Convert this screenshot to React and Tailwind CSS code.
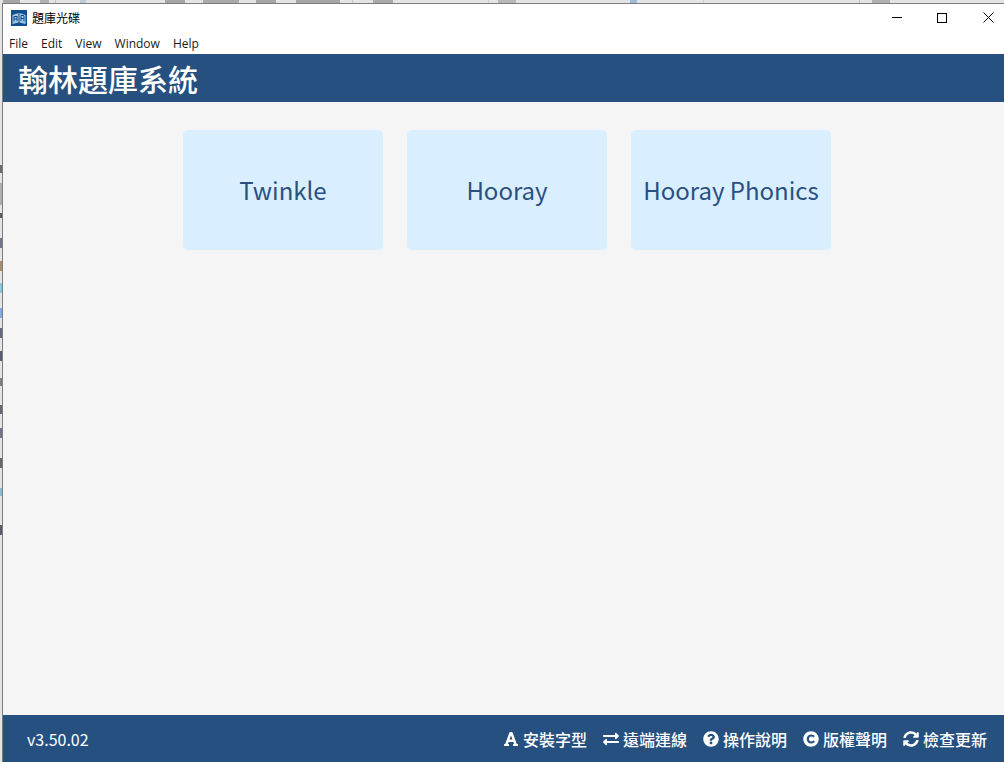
import React from 'react';
import { FaFont, FaExchangeAlt, FaQuestionCircle, FaCopyright, FaSyncAlt } from 'react-icons/fa';

const cjk = "font-['Noto_Sans_CJK_TC','Noto_Sans',sans-serif]";

const links = [
  { label: '安裝字型', icon: FaFont },
  { label: '遠端連線', icon: FaExchangeAlt },
  { label: '操作說明', icon: FaQuestionCircle },
  { label: '版權聲明', icon: FaCopyright },
  { label: '檢查更新', icon: FaSyncAlt },
];

const books = ['Twinkle', 'Hooray', 'Hooray Phonics'];
const menus = ['File', 'Edit', 'View', 'Window', 'Help'];

// bits of the window behind that stick out at the top and left
const topMarks = [
  [3, 17, '#4a4a4a'], [40, 9, '#6a6a6a'], [55, 1, '#b08a8a'], [80, 6, '#8fa6c0'], [165, 20, '#4a4a4a'],
  [203, 36, '#555555'], [256, 20, '#4a4a4a'], [296, 44, '#4a4a4a'], [352, 1, '#999999'], [373, 20, '#555555'],
  [488, 1, '#aaaaaa'], [498, 18, '#777777'], [630, 7, '#2f7fd0'], [703, 1, '#aaaaaa'], [859, 1, '#999999'],
  [872, 18, '#666666'],
];
const leftMarks = [
  [22, 8, '#3a3a3a'], [40, 22, '#9a9a9a'], [70, 5, '#222222'], [95, 10, '#444466'], [118, 10, '#8a6a3a'],
  [140, 10, '#5fb8d8'], [165, 10, '#5f8fd8'], [185, 10, '#333355'], [208, 10, '#222244'], [235, 8, '#555555'],
  [262, 9, '#333344'], [285, 10, '#444466'], [315, 10, '#333333'], [345, 8, '#6aaac8'], [382, 10, '#222233'],
];

const AppIcon = () => (
  <svg width="16" height="16" viewBox="0 0 16 16" className="shrink-0">
    <rect width="16" height="16" fill="#0f4f8f" />
    <path d="M1.5 5 7.5 3V12.5L1.5 14Z M8.5 3 14.5 5V14L8.5 12.5Z" fill="#a9c6e0" />
    <path d="M3 6.5H6M3 6.5V11.5M6 6V11M3 9H6M10 5.5H13M10 5.5V11M13 6V11.5M10 8.5H13" stroke="#0f4f8f" strokeWidth="1" fill="none" />
  </svg>
);

const App = () => (
  <div className={`flex h-[762px] w-[1004px] flex-col overflow-hidden bg-[#e4e4e4] ${cjk}`}>
    {/* desktop behind the window */}
    <svg width="1004" height="3" className="block shrink-0 opacity-40">
      {topMarks.map(([x, w, c]) => (
        <rect key={x} x={x} y="0" width={w} height="3" fill={c} />
      ))}
    </svg>
    <div className="flex min-h-0 flex-1">
      <svg width="2" height="759" className="block shrink-0 opacity-70">
        {leftMarks.map(([y, h, c]) => (
          <rect key={y} x="0" y={y + 140} width="2" height={h} fill={c} />
        ))}
      </svg>
      <div className="flex min-w-0 flex-1 flex-col border-t border-l border-[#7d7d7d]">
        {/* title bar */}
        <div className="flex h-[29px] shrink-0 items-center bg-white pb-[2px] pl-[8px]">
          <AppIcon />
          <span className="ml-[5px] text-[12px] text-black">題庫光碟</span>
          <div className="ml-auto flex items-center">
            <div className="mr-[35px] h-px w-[10px] bg-black" />
            <div className="mr-[36px] h-[10px] w-[10px] border border-black" />
            <svg width="11" height="11" viewBox="0 0 11 11" className="mr-[10px]">
              <path d="M.5.5 10.5 10.5M10.5.5.5 10.5" stroke="#000" strokeWidth="1" fill="none" />
            </svg>
          </div>
        </div>
        {/* menu */}
        <div className="flex h-[21px] shrink-0 items-center gap-[13px] bg-white pt-px pl-[6px] font-['Open_Sans',sans-serif] text-[12px] text-[#1a1a1a]">
          {menus.map((m) => (
            <span key={m}>{m}</span>
          ))}
        </div>
        {/* header */}
        <div className="flex h-[48px] shrink-0 items-center bg-[#25507f] pl-[15px]">
          <h1 className="text-[30px] leading-none font-medium text-white">翰林題庫系統</h1>
        </div>
        {/* cards */}
        <div className="flex flex-1 items-start gap-[24px] bg-[#f5f5f5] pt-[28px] pl-[180px]">
          {books.map((b) => (
            <div
              key={b}
              className="flex h-[120px] w-[200px] items-center justify-center rounded-[5px] bg-[#d9eeff] text-[24px] text-[#2a5082]"
            >
              {b}
            </div>
          ))}
        </div>
        {/* footer */}
        <div className="flex h-[47px] shrink-0 items-center justify-between bg-[#25507f] pr-[17px] pl-[24px] text-white">
          <span className="text-[16px]">v3.50.02</span>
          <div className="flex items-center gap-[16px]">
            {links.map(({ label, icon: Icon }) => (
              <div key={label} className="flex items-center gap-[4px] text-[16px] font-medium">
                <Icon className="h-[16px] w-[16px]" />
                <span>{label}</span>
              </div>
            ))}
          </div>
        </div>
      </div>
    </div>
  </div>
);

export default App;
